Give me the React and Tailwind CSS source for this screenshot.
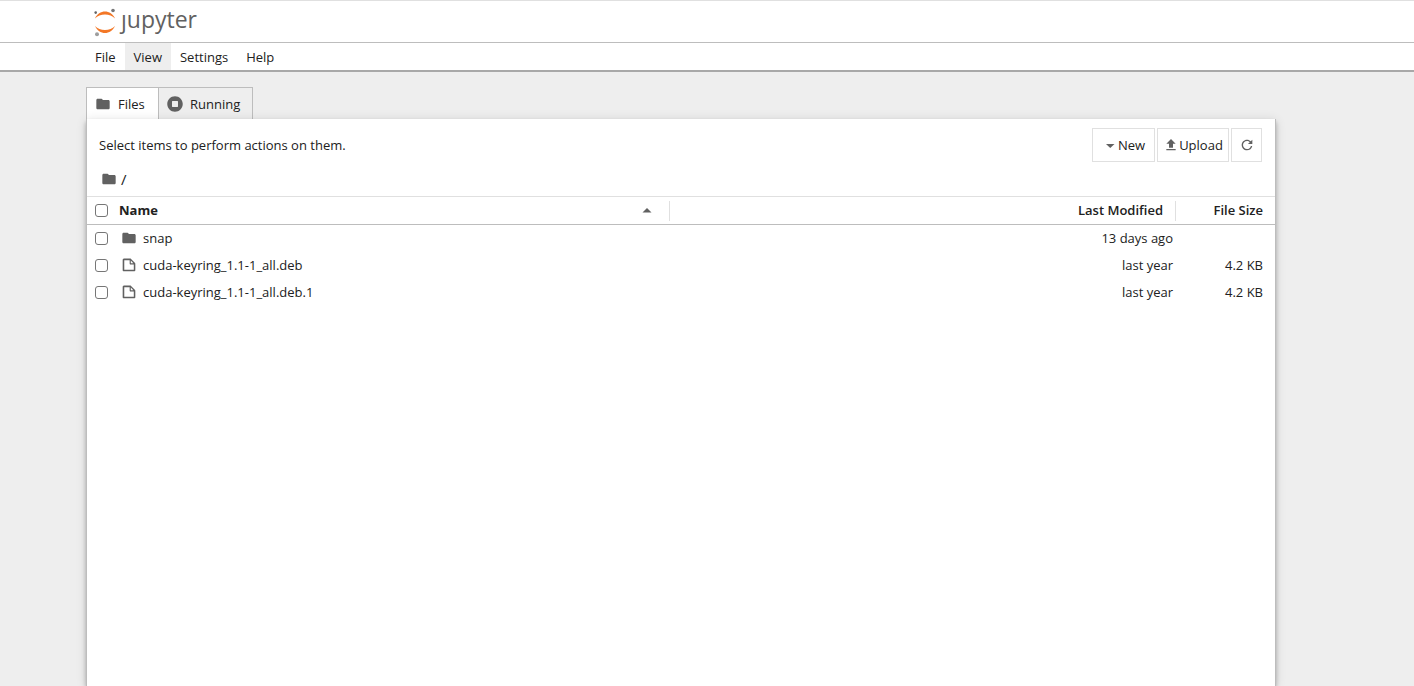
import React, { useState } from "react";

const FolderIcon = ({ className }) => (
    <svg className={className} viewBox="0 0 24 24" fill="#616161" aria-hidden="true">
        <path d="M10 4H4c-1.1 0-1.99.9-1.99 2L2 18c0 1.1.9 2 2 2h16c1.1 0 2-.9 2-2V8c0-1.1-.9-2-2-2h-8l-2-2z" />
    </svg>
);

const FileIcon = ({ className }) => (
    <svg className={className} viewBox="0 0 22 22" fill="#616161" aria-hidden="true">
        <path d="M19.3 8.2l-5.5-5.5c-.3-.3-.7-.5-1.2-.5H3.9c-.8.1-1.6.9-1.6 1.8v14.1c0 .9.7 1.6 1.6 1.6h14.2c.9 0 1.6-.7 1.6-1.6V9.4c.1-.5-.1-.9-.4-1.2zm-5.8-3.3l3.4 3.6h-3.4V4.9zm3.9 12.7H4.7c-.1 0-.2 0-.2-.2V4.7c0-.2.1-.3.2-.3h7.2v4.4s0 .8.3 1.1c.3.3 1.1.3 1.1.3h4.3v7.2s-.1.2-.2.2z" />
    </svg>
);

const RunningIcon = ({ className }) => (
    <svg className={className} viewBox="0 0 512 512" fill="#616161" aria-hidden="true">
        <path d="M256 8C119 8 8 119 8 256s111 248 248 248 248-111 248-248S393 8 256 8zm96 328c0 8.8-7.2 16-16 16H176c-8.8 0-16-7.2-16-16V176c0-8.8 7.2-16 16-16h160c8.8 0 16 7.2 16 16v160z" />
    </svg>
);

const CaretDownIcon = ({ className }) => (
    <svg className={className} viewBox="0 0 16 16" fill="#616161" aria-hidden="true">
        <path d="M4 7h8.500L8.250 11z" />
    </svg>
);

const CaretUpIcon = ({ className }) => (
    <svg className={className} viewBox="0 0 16 16" fill="#616161" aria-hidden="true">
        <path d="M3.500 9.500h9L8 5z" />
    </svg>
);

const UploadIcon = ({ className }) => (
    <svg className={className} viewBox="0 0 24 24" fill="#616161" aria-hidden="true">
        <path d="M9 16h6v-6h4l-7-7-7 7h4zm-4 2h14v2H5z" />
    </svg>
);

const RefreshIcon = ({ className }) => (
    <svg className={className} viewBox="0 0 18 18" fill="#616161" aria-hidden="true">
        <path d="M9 13.5c-2.49 0-4.5-2.01-4.5-4.5S6.51 4.5 9 4.5c1.24 0 2.36.52 3.17 1.33L10 8h5V3l-1.76 1.76C12.15 3.68 10.66 3 9 3 5.69 3 3.01 5.69 3.01 9S5.69 15 9 15c2.97 0 5.43-2.16 5.9-5h-1.52c-.46 2-2.24 3.5-4.38 3.5z" />
    </svg>
);

const Logo = () => (
    <a href="#tree" className="flex items-start gap-1 w-fit text-[#616161]">
        <svg className="w-6 h-8" viewBox="0 0 24 32" aria-hidden="true">
            <path d="M2 13.500C4 9 8 6.600 12 6.600S20 9 22 13.500C19.500 11 16 9.600 12 9.600S4.500 11 2 13.500z" fill="#f37726" />
            <path d="M2 21C4 25.500 8 28 12 28S20 25.500 22 21C19.500 23.500 16 25 12 25S4.500 23.500 2 21z" fill="#f37726" />
            <circle cx="20" cy="5.500" r="1.800" fill="#767677" />
            <circle cx="2.700" cy="7.600" r="1.300" fill="#616262" />
            <circle cx="4" cy="29.200" r="2" fill="#9e9e9e" />
        </svg>
        <span className="text-[23px] leading-[28px]">ȷupyter</span>
    </a>
);

const menus = ["File", "View", "Settings", "Help"];

const files = [
    { name: "snap", type: "directory", modified: "13 days ago", size: "" },
    { name: "cuda-keyring_1.1-1_all.deb", type: "file", modified: "last year", size: "4.2 KB" },
    { name: "cuda-keyring_1.1-1_all.deb.1", type: "file", modified: "last year", size: "4.2 KB" },
];

const checkboxStyle =
    "block appearance-none w-[13px] h-[13px] rounded-[3px] border border-[#767676] bg-white checked:bg-[#2196f3]";
const toolButton =
    "flex items-center justify-center h-[34px] border border-[#e0e0e0] bg-white";

const App = () => {
    const [tab, setTab] = useState("files");

    return (
        <div className="min-h-screen flex flex-col overflow-hidden bg-[#eeeeee] text-[13px] leading-[17px] text-[#212121] font-['Open_Sans',sans-serif]">
            <header className="h-[43px] shrink-0 bg-white border-t border-t-[#e0e0e0] border-b border-b-[#bdbdbd] pt-1 pl-[93px]">
                <Logo />
            </header>

            <nav className="h-[29px] shrink-0 bg-white border-b-2 border-[#a8a8a8] pl-[86px] flex">
                {menus.map((menu) => (
                    <button
                        key={menu}
                        className={`px-[9px] pt-px ${menu === "View" ? "bg-[#eeeeee]" : ""}`}>
                        {menu}
                    </button>
                ))}
            </nav>

            <main className="grow flex flex-col pt-[15px] ml-[86px] mr-[138px]">
                <div className="flex h-8 shrink-0" role="tablist">
                    <button
                        role="tab"
                        aria-selected={tab === "files"}
                        onClick={() => setTab("files")}
                        className={`flex items-center gap-[7px] w-[72px] pt-px pl-2 border-l border-t border-[#bdbdbd] ${
                            tab === "files" ? "bg-white" : ""
                        }`}>
                        <FolderIcon className="w-4 h-4" />
                        Files
                    </button>
                    <button
                        role="tab"
                        aria-selected={tab === "running"}
                        onClick={() => setTab("running")}
                        className={`flex items-center gap-[7px] w-[95px] pt-px pl-2 border-x border-t border-[#bdbdbd] ${
                            tab === "running" ? "bg-white" : ""
                        }`}>
                        <RunningIcon className="w-4 h-4" />
                        Running
                    </button>
                </div>

                <section className="grow bg-white border-x border-[#bdbdbd] shadow-[0_2px_4px_-1px_rgba(0,0,0,0.2),0_4px_5px_0_rgba(0,0,0,0.14),0_1px_10px_0_rgba(0,0,0,0.12)]">
                    <div className="flex items-center justify-between pt-[9px] pl-3 pr-[13px]">
                        <p>Select items to perform actions on them.</p>
                        <div className="flex gap-[2px]">
                            <button className={`${toolButton} w-[63px]`}>
                                <CaretDownIcon className="w-4 h-4" />
                                New
                            </button>
                            <button className={`${toolButton} w-[72px]`}>
                                <UploadIcon className="w-4 h-4" />
                                Upload
                            </button>
                            <button className={`${toolButton} w-[31px]`} aria-label="Refresh">
                                <RefreshIcon className="w-4 h-4" />
                            </button>
                        </div>
                    </div>

                    <div className="flex items-center gap-1 h-[34px] pl-[14px]">
                        <FolderIcon className="w-4 h-4" />
                        <a href="#root" className="text-[15px]">/</a>
                    </div>

                    <table className="w-full table-fixed border-collapse">
                        <colgroup>
                            <col className="w-8" />
                            <col className="w-[551px]" />
                            <col />
                            <col className="w-[99px]" />
                        </colgroup>
                        <thead>
                            <tr className="h-7 border-t border-t-[#e0e0e0] border-b border-b-[#bdbdbd]">
                                <th className="pl-2">
                                    <input type="checkbox" aria-label="Select all" className={checkboxStyle} />
                                </th>
                                <th>
                                    <div className="flex items-center justify-between h-5 pr-[14px] border-r border-[#e0e0e0]">
                                        Name
                                        <CaretUpIcon className="w-4 h-4" />
                                    </div>
                                </th>
                                <th>
                                    <div className="flex items-center justify-end h-5 pr-3 border-r border-[#e0e0e0] font-semibold">
                                        Last Modified
                                    </div>
                                </th>
                                <th className="pr-3 text-right font-semibold">File Size</th>
                            </tr>
                        </thead>
                        <tbody>
                            {files.map((file) => (
                                <tr key={file.name} className="h-[27px]">
                                    <td className="pl-2">
                                        <input
                                            type="checkbox"
                                            aria-label={`Select ${file.name}`}
                                            className={checkboxStyle}
                                        />
                                    </td>
                                    <td>
                                        <div className="flex items-center gap-[6px] pl-[2px]">
                                            {file.type === "directory" ? (
                                                <FolderIcon className="w-4 h-4" />
                                            ) : (
                                                <FileIcon className="w-4 h-4" />
                                            )}
                                            {file.name}
                                        </div>
                                    </td>
                                    <td className="pr-[3px] text-right">{file.modified}</td>
                                    <td className="pr-3 text-right">{file.size}</td>
                                </tr>
                            ))}
                        </tbody>
                    </table>
                </section>
            </main>
        </div>
    );
};

export default App;
